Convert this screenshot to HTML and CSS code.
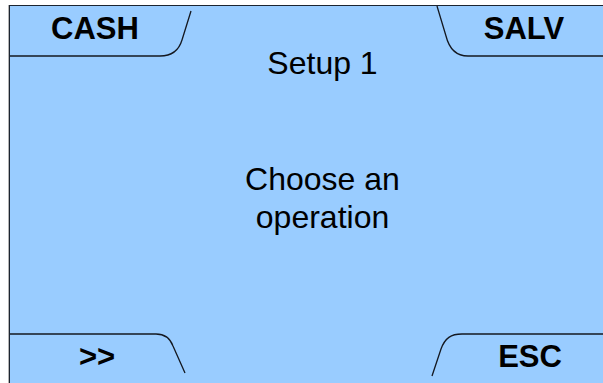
FILE: index.html
```html
<!DOCTYPE html>
<html>
<head>
<meta charset="utf-8">
<link rel="stylesheet" href="styles.css">
</head>
<body>
<div class="screen">
  <svg class="outline" width="593" height="378" viewBox="0 0 593 378">
    <path d="M0,50 H150 C162,50 169,44 172,34 L181,5" />
    <path d="M427,0 L436,30 C439,42 445,50 458,50 H593" />
    <path d="M0,328 H146 C155,328 160,332 163,340 L175,367" />
    <path d="M422,370 L431,343 C435,332 441,328 452,328 H593" />
  </svg>
  <div class="tab tab-top tab-left">CASH</div>
  <div class="title">Setup 1</div>
  <div class="tab tab-top tab-right salv">SALV</div>
  <div class="message">Choose an<br>operation</div>
  <div class="tab tab-bottom tab-left next">&gt;&gt;</div>
  <div class="tab tab-bottom tab-right esc">ESC</div>
</div>
</body>
</html>
```

FILE: styles.css
```css
html, body {
  margin: 0;
  padding: 0;
  background: #ffffff;
  overflow: hidden;
}

body {
  font-family: "Liberation Sans", Arial, sans-serif;
  color: #000;
}

.screen {
  position: relative;
  margin: 5px 0 0 9px;
  width: 593px;
  height: 378px;
  background: #99ccff;
  border-top: 1px solid #1c2430;
  border-left: 1px solid #1c2430;
  box-shadow: -1px 0 0 #b4b4b4;
  display: grid;
  grid-template-columns: 170px 1fr 138px;
  grid-template-rows: 50px 1fr 50px;
}

.outline {
  position: absolute;
  left: 0;
  top: 0;
  fill: none;
  stroke: #141820;
  stroke-width: 1.3;
}

.tab {
  font-weight: bold;
  font-size: 31px;
  line-height: 30px;
  text-align: center;
  white-space: nowrap;
}

.tab-top {
  padding-top: 8px;
  grid-row: 1;
}

.tab-bottom {
  padding-top: 8px;
  grid-row: 3;
}

.tab-left {
  grid-column: 1;
}

.tab-right {
  grid-column: 3;
}

.salv {
  padding-right: 20px;
}

.esc {
  padding-right: 8px;
}

.next {
  padding-left: 4px;
}

.title {
  grid-row: 1;
  grid-column: 2;
  align-self: start;
  padding-top: 39px;
  font-size: 32px;
  line-height: 36px;
  text-align: center;
  white-space: nowrap;
}

.message {
  grid-row: 2;
  grid-column: 2;
  align-self: center;
  padding-top: 5px;
  font-size: 32px;
  line-height: 38px;
  text-align: center;
  white-space: nowrap;
}
```
